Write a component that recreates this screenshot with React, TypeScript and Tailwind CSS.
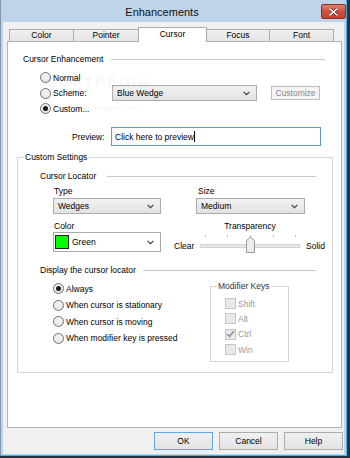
import React from "react";

function Chevron() {
  return (
    <svg width="7" height="5" viewBox="0 0 7 5" className="shrink-0">
      <polyline points="0.6,0.8 3.5,3.7 6.4,0.8" fill="none" stroke="#3c3c3c" strokeWidth="1.2" />
    </svg>
  );
}

function Radio({ checked }: { checked?: boolean }) {
  return (
    <span className="flex h-[11px] w-[11px] shrink-0 items-center justify-center rounded-full border border-[#6f6f6f] bg-gradient-to-b from-[#f4f4f4] to-[#e6e6e6]">
      {checked && <span className="h-[5px] w-[5px] rounded-full bg-[#1b1b1b]" />}
    </span>
  );
}

function Check({ checked }: { checked?: boolean }) {
  return (
    <span className="flex h-[11px] w-[11px] shrink-0 items-center justify-center border border-[#c6c6c6] bg-[#e9e9e9]">
      {checked && (
        <svg width="9" height="8" viewBox="0 0 9 8">
          <polyline points="1,4 3.5,6.5 8,1" fill="none" stroke="#8a8a8a" strokeWidth="1.4" />
        </svg>
      )}
    </span>
  );
}

function DropSelect({ text, className }: { text: string; className: string }) {
  return (
    <div
      className={`flex items-center justify-between border border-[#acacac] bg-gradient-to-b from-[#f2f2f2] to-[#e2e2e2] pl-[4px] pr-[6px] ${className}`}
    >
      <span>{text}</span>
      <Chevron />
    </div>
  );
}

function Btn({ label, def }: { label: string; def?: boolean }) {
  return (
    <div
      className={
        def
          ? "flex h-[18px] w-[59px] items-center justify-center border border-[#5ea6e8] bg-gradient-to-b from-[#f0f0f0] to-[#e3e3e3]"
          : "flex h-[18px] w-[59px] items-center justify-center border border-[#acacac] bg-gradient-to-b from-[#f0f0f0] to-[#e3e3e3]"
      }
    >
      {label}
    </div>
  );
}

function Tab({ label, w, selected }: { label: string; w: string; selected?: boolean }) {
  if (selected) {
    return (
      <div
        className={`relative z-10 -mb-px -ml-px h-[15px] border border-b-0 border-[#acacac] bg-white text-center leading-[12px] ${w}`}
      >
        {label}
      </div>
    );
  }
  return (
    <div
      className={`-ml-px h-[12px] border border-b-0 border-[#acacac] bg-gradient-to-b from-[#f0f0f0] to-[#e4e4e4] text-center leading-[11px] ${w}`}
    >
      {label}
    </div>
  );
}

function SliderArt() {
  const ticks = [5, 27, 50, 73, 95];
  return (
    <svg width="100" height="22" viewBox="0 0 100 22">
      {ticks.map((x) => (
        <line key={x} x1={x + 0.5} y1="3" x2={x + 0.5} y2="5" stroke="#b8b8b8" strokeWidth="1" />
      ))}
      <rect x="0.5" y="12.5" width="99" height="3" fill="#e7e7e7" stroke="#d4d4d4" />
      <path d="M46.5,20.5 L46.5,8.5 L50.5,5 L54.5,8.5 L54.5,20.5 Z" fill="#ececec" stroke="#9a9a9a" />
    </svg>
  );
}

export default function App() {
  return (
    <div className="h-[458px] w-[350px] bg-[#1c3646] font-['Liberation_Sans',Arial,sans-serif] text-[8.5px] leading-[12px] text-black">
      <div className="flex h-[456px] w-[347px] flex-col border-b border-l border-r border-b-[#3fb5e3] border-l-[#7f96ad] border-r-[#3fb5e3] bg-[#bfd4ea] px-[2px] pb-[1px]">
        {/* title bar */}
        <div className="-mr-[2px] flex h-[22px] items-start">
          <div className="flex-1 pt-[5px] text-center text-[11px] leading-[14px] text-[#111]">Enhancements</div>
          <div className="mt-[4px] flex h-[15px] w-[25px] items-center justify-center rounded-[2px] border border-[#8e3027] bg-gradient-to-b from-[#e2816f] via-[#c9503f] to-[#c24433]">
            <svg width="9" height="8" viewBox="0 0 9 8">
              <path d="M1,1 L8,7 M8,1 L1,7" stroke="#5a1a14" strokeWidth="2.6" strokeLinecap="square" />
              <path d="M1,1 L8,7 M8,1 L1,7" stroke="#ffffff" strokeWidth="1.5" strokeLinecap="square" />
            </svg>
          </div>
        </div>

        {/* body */}
        <div className="flex flex-1 flex-col bg-[#f0f0f0] pl-[4px] pr-[1px] pt-[5px]">
          {/* tabs */}
          <div className="ml-[3px] flex h-[14px] items-end">
            <Tab label="Color" w="w-[65px]" />
            <Tab label="Pointer" w="w-[66px]" />
            <Tab label="Cursor" w="w-[69px]" selected />
            <Tab label="Focus" w="w-[64px]" />
            <Tab label="Font" w="w-[65px]" />
          </div>

          {/* panel */}
          <div className="relative flex h-[387px] w-[335px] flex-col border border-[#b4b4b4] bg-white">
            {/* watermark */}
            <div className="pointer-events-none absolute left-[39px] top-[34px] text-[15px] font-bold tracking-[2px] text-[rgba(0,0,0,0.05)]">
              SOFTPEDIA
            </div>
            <div className="pointer-events-none absolute left-[70px] top-[61px] text-[7px] text-[rgba(0,0,0,0.08)]">
              www.softpedia.com
            </div>

            <div className="ml-[15px] mr-[16px] mt-[11px] flex h-[12px] items-center">
              <span className="w-[88px] shrink-0 whitespace-nowrap">Cursor Enhancement</span>
              <span className="h-px flex-1 bg-[#c9c9c9]" />
            </div>

            <div className="ml-[32px] mt-[5px] flex h-[15px] items-center gap-[2px]">
              <Radio />
              <span>Normal</span>
            </div>
            <div className="ml-[32px] flex h-[16px] items-center">
              <div className="flex w-[72px] items-center gap-[2px]">
                <Radio />
                <span>Scheme:</span>
              </div>
              <DropSelect text="Blue Wedge" className="h-[16px] w-[145px]" />
              <div className="ml-[14px] flex h-[14px] w-[49px] items-center justify-center border border-[#bfbfbf] bg-[#f4f4f4] text-[#8a8a8a]">
                Customize
              </div>
            </div>
            <div className="ml-[32px] flex h-[15px] items-center gap-[2px]">
              <Radio checked />
              <span>Custom...</span>
            </div>

            <div className="ml-[64px] mt-[11px] flex h-[19px] items-center">
              <span className="w-[39px]">Preview:</span>
              <div className="flex h-[19px] w-[210px] items-center border border-[#569de5] px-[3px]">
                <span>Click here to preview</span>
                <span className="h-[11px] w-px bg-black" />
              </div>
            </div>

            {/* Custom Settings */}
            <fieldset className="ml-[9px] mt-[5px] h-[222px] w-[316px] border border-[#d6d6d6]">
              <legend className="ml-[6px] px-[1px] leading-[12px]">Custom Settings</legend>

              <div className="ml-[22px] mr-[16px] mt-[7px] flex h-[12px] items-center">
                <span className="w-[67px] shrink-0 whitespace-nowrap">Cursor Locator</span>
                <span className="h-px flex-1 bg-[#c9c9c9]" />
              </div>

              <div className="ml-[35px] mt-[3px] grid grid-cols-[108px_109px] gap-x-[35px]">
                <div className="h-[12px] pl-[1px]">Type</div>
                <div className="h-[12px] pl-[2px]">Size</div>
                <DropSelect text="Wedges" className="mt-[1px] h-[16px]" />
                <DropSelect text="Medium" className="mt-[1px] h-[16px]" />
              </div>

              <div className="ml-[35px] mt-[6px] flex">
                <div className="flex w-[108px] flex-col">
                  <div className="h-[12px] pl-[1px]">Color</div>
                  <div className="flex h-[20px] items-center border border-[#acacac] bg-white pl-[1px] pr-[6px]">
                    <span className="h-[14px] w-[14px] border border-[#222] bg-[#00ff00]" />
                    <span className="ml-[3px] flex-1">Green</span>
                    <Chevron />
                  </div>
                </div>
                <div className="ml-[13px] grid grid-cols-[26px_100px_auto]">
                  <div className="h-[12px]" />
                  <div className="h-[12px] text-center">Transparency</div>
                  <div className="h-[12px]" />
                  <div className="pt-[8px]">Clear</div>
                  <SliderArt />
                  <div className="pl-[6px] pt-[8px]">Solid</div>
                </div>
              </div>

              <div className="ml-[22px] mr-[16px] mt-[10px] flex h-[12px] items-center">
                <span className="w-[103px] shrink-0 whitespace-nowrap">Display the cursor locator</span>
                <span className="h-px flex-1 bg-[#c9c9c9]" />
              </div>

              <div className="ml-[35px] mt-[4px] flex">
                <div className="flex w-[157px] flex-col">
                  <div className="flex h-[17px] items-center gap-[2px]">
                    <Radio checked />
                    <span>Always</span>
                  </div>
                  <div className="flex h-[16px] items-center gap-[2px]">
                    <Radio />
                    <span>When cursor is stationary</span>
                  </div>
                  <div className="flex h-[17px] items-center gap-[2px]">
                    <Radio />
                    <span>When cursor is moving</span>
                  </div>
                  <div className="flex h-[16px] items-center gap-[2px] whitespace-nowrap">
                    <Radio />
                    <span>When modifier key is pressed</span>
                  </div>
                </div>
                <fieldset className="h-[82px] w-[79px] border border-[#d6d6d6]">
                  <legend className="ml-[6px] px-[1px] leading-[12px] text-[#333]">Modifier Keys</legend>
                  <div className="flex flex-col pl-[14px] pt-[4px] text-[#9a9a9a]">
                    <div className="flex h-[15px] items-center gap-[2px]">
                      <Check />
                      <span>Shift</span>
                    </div>
                    <div className="flex h-[15px] items-center gap-[2px]">
                      <Check />
                      <span>Alt</span>
                    </div>
                    <div className="flex h-[16px] items-center gap-[2px]">
                      <Check checked />
                      <span>Ctrl</span>
                    </div>
                    <div className="flex h-[15px] items-center gap-[2px]">
                      <Check />
                      <span>Win</span>
                    </div>
                  </div>
                </fieldset>
              </div>
            </fieldset>
          </div>

          {/* buttons */}
          <div className="mt-[4px] flex justify-end gap-[6px]">
            <Btn label="OK" def />
            <Btn label="Cancel" />
            <Btn label="Help" />
          </div>
        </div>
      </div>
    </div>
  );
}
